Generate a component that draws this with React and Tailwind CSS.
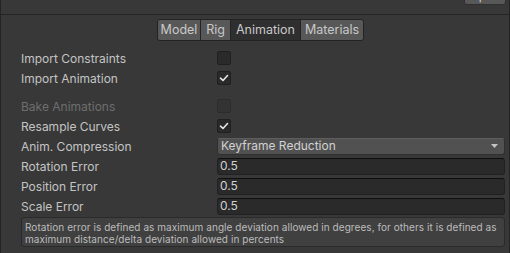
import React from "react";

const font = { fontFamily: "Inter, 'Noto Sans', sans-serif" };

function Check() {
  return (
    <svg width="10" height="10" viewBox="0 0 10 10" className="block">
      <polyline points="1.5,5.2 4,7.5 8.5,2.5" fill="none" stroke="#e6e6e6" strokeWidth="1.6" strokeLinecap="round" strokeLinejoin="round" />
    </svg>
  );
}

function Checkbox({ checked, disabled }) {
  return (
    <div
      className={
        "w-[14px] h-[14px] rounded-[2px] border flex items-center justify-center " +
        (disabled ? "bg-[#333333] border-[#2c2c2c]" : "bg-[#2a2a2a] border-[#202020]")
      }
    >
      {checked ? <Check /> : null}
    </div>
  );
}

function Row({ label, disabled, children }) {
  return (
    <div className="flex items-center h-[20px] pl-[20px] pr-[4px]">
      <div className={"w-[196px] pt-[2px] text-[12px] " + (disabled ? "text-[#6e6e6e]" : "text-[#c4c4c4]")}>{label}</div>
      <div className="flex-1 flex items-center">{children}</div>
    </div>
  );
}

function Field({ value }) {
  return (
    <div className="w-full h-[17px] bg-[#2a2a2a] border border-[#212121] border-t-[#0f0f0f] rounded-[3px] flex items-center pl-[2px] text-[12px] text-[#d2d2d2]">
      {value}
    </div>
  );
}

export default function App() {
  return (
    <div style={font} className="w-[510px] h-[253px] bg-[#383838] overflow-hidden border-l border-r border-[#242424] flex flex-col">
      <div className="h-[15px] shrink-0 border-b border-[#242424] flex justify-end pr-[3px]">
        <div className="w-[42px] h-[18px] mt-[-13px] bg-[#585858] rounded-[3px] border border-[#303030] text-[12px] text-[#d0d0d0] flex items-center justify-center">
          Open
        </div>
      </div>
      <div className="flex mt-[4px] ml-[156px] h-[22px] shrink-0">
        <div className="flex rounded-[3px] border border-[#232323] overflow-hidden text-[12.5px] text-[#c8c8c8]">
          <div className="w-[43px] bg-[#585858] flex items-center justify-center border-r border-[#232323]">Model</div>
          <div className="w-[30px] bg-[#585858] flex items-center justify-center border-r border-[#232323]">Rig</div>
          <div className="w-[70px] bg-[#2f2f2f] flex items-center justify-center border-r border-[#232323]">Animation</div>
          <div className="w-[62px] bg-[#585858] flex items-center justify-center">Materials</div>
        </div>
      </div>
      <div className="mt-[7px] flex flex-col">
        <Row label="Import Constraints"><Checkbox /></Row>
        <Row label="Import Animation"><Checkbox checked /></Row>
        <div className="h-[8px]" />
        <Row label="Bake Animations" disabled><Checkbox disabled /></Row>
        <Row label="Resample Curves"><Checkbox checked /></Row>
        <Row label="Anim. Compression">
          <div className="w-full h-[17px] bg-[#515151] border border-[#303030] border-t-[#5e5e5e] rounded-[3px] flex items-center justify-between pl-[3px] pr-[6px] text-[12px] text-[#d2d2d2]">
            <span>Keyframe Reduction</span>
            <svg width="7" height="4" viewBox="0 0 7 4" className="block">
              <polygon points="0,0 7,0 3.5,4" fill="#c4c4c4" />
            </svg>
          </div>
        </Row>
        <Row label="Rotation Error"><Field value="0.5" /></Row>
        <Row label="Position Error"><Field value="0.5" /></Row>
        <Row label="Scale Error"><Field value="0.5" /></Row>
        <div className="ml-[20px] mr-[4px] mt-[1px] h-[30px] bg-[#404040] border border-[#2a2a2a] rounded-[3px] px-[3px] pt-[3px] text-[10px] leading-[12px] tracking-[0.06px] text-[#bdbdbd]">
          Rotation error is defined as maximum angle deviation allowed in degrees, for others it is defined as maximum distance/delta deviation allowed in percents
        </div>
        <Row label=""><div className="mt-[10px]"><Checkbox /></div></Row>
      </div>
    </div>
  );
}
